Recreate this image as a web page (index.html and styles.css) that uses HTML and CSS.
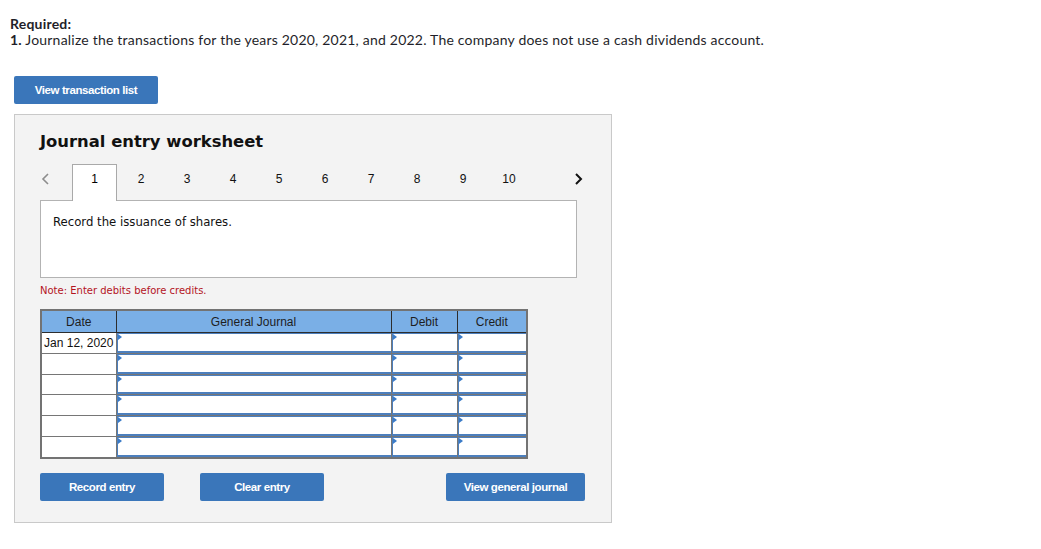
FILE: index.html
```html
<!DOCTYPE html>
<html>
<head>
<meta charset="utf-8">
<link rel="stylesheet" href="styles.css">
</head>
<body>
<div class="page">
  <div class="req">
    <div class="req-title">Required:</div>
    <div class="req-text"><b>1.</b> Journalize the transactions for the years 2020, 2021, and 2022. The company does not use a cash dividends account.</div>
  </div>
  <button class="btn btn-list">View transaction list</button>
  <div class="panel">
    <h2 class="title">Journal entry worksheet</h2>
    <div class="tabs">
      <span class="arrow prev"><svg width="8" height="12" viewBox="0 0 8 12"><path d="M7 1 L2 6 L7 11" fill="none" stroke="#8c8c8c" stroke-width="1.6"/></svg></span>
      <span class="tab active">1</span>
      <span class="tab">2</span>
      <span class="tab">3</span>
      <span class="tab">4</span>
      <span class="tab">5</span>
      <span class="tab">6</span>
      <span class="tab">7</span>
      <span class="tab">8</span>
      <span class="tab">9</span>
      <span class="tab">10</span>
      <span class="arrow next"><svg width="8" height="12" viewBox="0 0 8 12"><path d="M1 1 L6 6 L1 11" fill="none" stroke="#111" stroke-width="2"/></svg></span>
    </div>
    <div class="desc">Record the issuance of shares.</div>
    <div class="note">Note: Enter debits before credits.</div>
    <table class="journal">
      <colgroup>
        <col class="c-date"><col class="c-gj"><col class="c-dr"><col class="c-cr">
      </colgroup>
      <thead>
        <tr><th>Date</th><th>General Journal</th><th>Debit</th><th>Credit</th></tr>
      </thead>
      <tbody>
        <tr><td class="date">Jan 12, 2020</td><td class="in"><div class="box"><i class="tri"></i></div></td><td class="in"><div class="box"><i class="tri"></i></div></td><td class="in"><div class="box"><i class="tri"></i></div></td></tr>
        <tr><td class="date"></td><td class="in"><div class="box"><i class="tri"></i></div></td><td class="in"><div class="box"><i class="tri"></i></div></td><td class="in"><div class="box"><i class="tri"></i></div></td></tr>
        <tr><td class="date"></td><td class="in"><div class="box"><i class="tri"></i></div></td><td class="in"><div class="box"><i class="tri"></i></div></td><td class="in"><div class="box"><i class="tri"></i></div></td></tr>
        <tr><td class="date"></td><td class="in"><div class="box"><i class="tri"></i></div></td><td class="in"><div class="box"><i class="tri"></i></div></td><td class="in"><div class="box"><i class="tri"></i></div></td></tr>
        <tr><td class="date"></td><td class="in"><div class="box"><i class="tri"></i></div></td><td class="in"><div class="box"><i class="tri"></i></div></td><td class="in"><div class="box"><i class="tri"></i></div></td></tr>
        <tr><td class="date"></td><td class="in"><div class="box"><i class="tri"></i></div></td><td class="in"><div class="box"><i class="tri"></i></div></td><td class="in"><div class="box"><i class="tri"></i></div></td></tr>
      </tbody>
    </table>
    <div class="actions">
      <button class="btn btn-record">Record entry</button>
      <button class="btn btn-clear">Clear entry</button>
      <button class="btn btn-view">View general journal</button>
    </div>
  </div>
</div>
</body>
</html>
```

FILE: styles.css
```css
html, body { margin: 0; padding: 0; background: #fff; }
.page { padding: 16px 10px 0 10px; }
.req { font-family: Lato, "Open Sans", sans-serif; font-size: 14px; line-height: 16px; letter-spacing: 0.21px; color: #1f1f2a; }
.req-title { font-weight: 700; }
.req-text b { font-weight: 700; }

.btn {
  display: flex; align-items: center; justify-content: center;
  background: #3a76ba; color: #fff; border: none; border-radius: 2px;
  font-family: "Liberation Sans", Arial, sans-serif; font-weight: 700; font-size: 11.5px;
  letter-spacing: -0.4px; height: 28px; padding: 0; cursor: pointer;
}
.btn-list { width: 144px; margin: 28px 0 0 4px; }

.panel {
  box-sizing: border-box; width: 598px; height: 409px;
  margin: 10px 0 0 4px; background: #f3f3f3; border: 1px solid #c9c9c9;
  padding: 17px 0 0 25px;
}
.title {
  margin: 0; font-family: "DejaVu Sans", Verdana, sans-serif; font-weight: 700;
  font-size: 16.4px; line-height: 20px; color: #111;
}
.tabs { display: flex; align-items: stretch; height: 37px; margin-top: 12px; margin-bottom: -1px; position: relative; z-index: 1; }
.arrow { display: flex; align-items: center; padding-bottom: 7px; box-sizing: border-box; }
.prev { width: 32px; padding-left: 1px; }
.next { margin-left: 43px; }
.tab {
  width: 46px; display: flex; align-items: center; justify-content: center;
  font-family: "Liberation Sans", Arial, sans-serif; font-size: 12px; color: #111;
  padding-bottom: 8px; box-sizing: border-box;
}
.tab.active { width: 45px; background: #fff; border: 1px solid #a9a9a9; border-bottom: none; color: #000; margin-right: 1px; }

.desc {
  box-sizing: border-box; width: 537px; height: 78px; background: #fff;
  border: 1px solid #b3b3b3; padding: 14px 0 0 12px;
  font-family: "DejaVu Sans", Verdana, sans-serif; font-size: 11.7px; color: #111;
}
.note {
  margin-top: 6px; font-family: "DejaVu Sans", Verdana, sans-serif; font-size: 10px;
  line-height: 13px; color: #b3141e;
}

.journal {
  margin-top: 12px; border-collapse: collapse; width: 487px; table-layout: fixed;
  font-family: "Liberation Sans", Arial, sans-serif; font-size: 12px; color: #111;
  border: 2px solid #737373;
}
.c-date { width: 75px; }
.c-gj { width: 275px; }
.c-dr { width: 66px; }
.c-cr { width: 70px; }
.journal th {
  background: #7aafe6; font-weight: 400; height: 20px; padding: 1px 0 0 0;
  border: 1px solid #2d2d2d; border-top: none; color: #1e1e1e;
}
.journal td { padding: 0; border: 1px solid #767676; background: #fff; }
.journal td.date { text-align: center; padding-top: 2px; line-height: 17px; }
.box {
  box-sizing: border-box; height: 19.8px; border-left: 1px solid #4c7fbd; border-top: 1px solid #4c7fbd;
  border-bottom: 2px solid #4c7fbd; position: relative;
}
.tri {
  position: absolute; left: 0; top: 0; width: 0; height: 0;
  border-left: 4px solid #3a7bc8; border-top: 3px solid transparent; border-bottom: 3px solid transparent;
}

.actions { display: flex; margin-top: 14px; }
.btn-record { width: 124px; }
.btn-clear { width: 124px; margin-left: 36px; }
.btn-view { width: 139px; margin-left: 122px; }
```
